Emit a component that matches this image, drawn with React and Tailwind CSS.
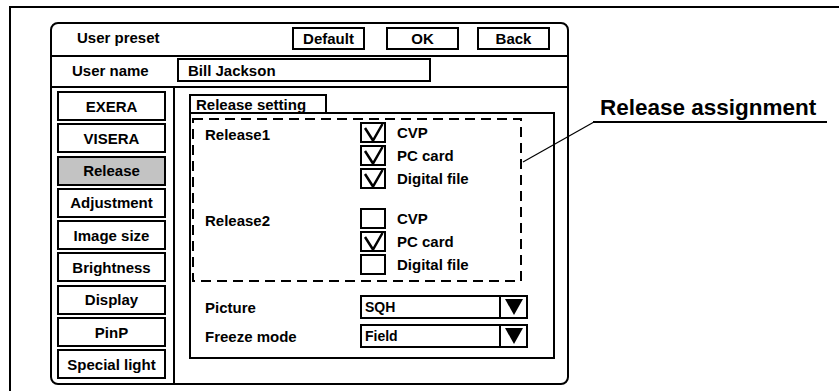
import React from 'react';

const MENU = [
  'EXERA',
  'VISERA',
  'Release',
  'Adjustment',
  'Image size',
  'Brightness',
  'Display',
  'PinP',
  'Special light',
];

const RELEASES = [
  { label: 'Release1', items: [['CVP', true], ['PC card', true], ['Digital file', true]] },
  { label: 'Release2', items: [['CVP', false], ['PC card', true], ['Digital file', false]] },
];

const Check = ({ checked }) => (
  <div className="w-[26px] h-[21px] border-2 border-black bg-white shrink-0">
    {checked && (
      <svg width="22" height="17" viewBox="0 0 22 17" className="overflow-visible">
        <polyline points="3,4 11,16.5 20.5,0" fill="none" stroke="#000" strokeWidth="2.5" />
      </svg>
    )}
  </div>
);

const Select = ({ value }) => (
  <div className="flex w-[168px] h-[24px] border-2 border-black">
    <div className="flex-1 flex items-center pl-[3px] text-[14px] leading-none">{value}</div>
    <div className="w-[27px] border-l-2 border-black flex items-center justify-center">
      <svg width="18" height="16" viewBox="0 0 18 16">
        <polygon points="0,0 18,0 9,16" fill="#000" />
      </svg>
    </div>
  </div>
);

const HeaderButton = ({ children, className = '' }) => (
  <div className={`mt-[3px] w-[73px] h-[23px] border-2 border-black flex items-center justify-center ${className}`}>
    {children}
  </div>
);

export default function App() {
  return (
    <div className="relative w-[839px] h-[391px] bg-white overflow-hidden text-black font-bold font-['Liberation_Sans',Arial,sans-serif] text-[15px] leading-none">
      {/* open frame, top and left edges only */}
      <div className="ml-[9px] mt-[6px] h-[385px] border-t-2 border-l-2 border-black">
        <div className="ml-[39px] mt-[14px] w-[519px] h-[363px] border-2 border-black rounded-[8px] flex flex-col">
          {/* Header */}
          <div className="flex items-start h-[33px] border-b-2 border-black">
            <div className="pl-[25px] pt-[6px]">User preset</div>
            <HeaderButton className="ml-auto">Default</HeaderButton>
            <HeaderButton className="ml-[21px]">OK</HeaderButton>
            <HeaderButton className="ml-[18px] mr-[17px]">Back</HeaderButton>
          </div>

          {/* User name */}
          <div className="flex items-start h-[31px] border-b-2 border-black">
            <div className="w-[125px] pl-[20px] pt-[6px]">User name</div>
            <div className="mt-[1px] w-[254px] h-[24px] border-2 border-black flex items-center pl-[9px]">
              Bill Jackson
            </div>
          </div>

          {/* Body */}
          <div className="flex flex-1">
            <div className="w-[123px] border-r-2 border-black pl-[5px] pt-[3px] flex flex-col gap-[2.3px]">
              {MENU.map((m) => (
                <div
                  key={m}
                  className={`w-[109px] h-[30px] border-2 border-black flex items-center justify-center ${
                    m === 'Release' ? 'bg-[#c3c3c3]' : 'bg-white'
                  }`}
                >
                  {m}
                </div>
              ))}
            </div>

            <div className="pl-[14px] pt-[6px]">
              <div className="w-[138px] h-[18px] border-2 border-b-0 border-black pl-[5px] pt-[1px]">
                Release setting
              </div>
              <div className="w-[366px] h-[247px] border-2 border-black">
                {/* Release assignment area */}
                <div className="relative ml-[1px] mt-[4px] w-[330px] h-[164px] pl-[13px] pt-[4px] flex flex-col gap-[19px]">
                  <svg width="330" height="164" className="absolute left-0 top-0 pointer-events-none">
                    <rect x="1" y="1" width="328" height="162" fill="none" stroke="#000" strokeWidth="2" strokeDasharray="10 6" />
                  </svg>
                  {RELEASES.map((r) => (
                    <div key={r.label} className="flex">
                      <div className="w-[155px] pt-[5px]">{r.label}</div>
                      <div className="flex flex-col gap-[2px]">
                        {r.items.map(([name, on]) => (
                          <div key={name} className="flex items-center h-[21px]">
                            <Check checked={on} />
                            <span className="pl-[11px]">{name}</span>
                          </div>
                        ))}
                      </div>
                    </div>
                  ))}
                </div>

                <div className="mt-[13px] pl-[14px] flex flex-col gap-[5px]">
                  <div className="flex items-center">
                    <div className="w-[155px]">Picture</div>
                    <Select value="SQH" />
                  </div>
                  <div className="flex items-center">
                    <div className="w-[155px]">Freeze mode</div>
                    <Select value="Field" />
                  </div>
                </div>
              </div>
            </div>
          </div>
        </div>
      </div>

      {/* Callout */}
      <svg width="839" height="391" className="absolute left-0 top-0 pointer-events-none">
        <line x1="523" y1="162" x2="594" y2="122" stroke="#000" strokeWidth="1.2" />
      </svg>
      <div className="absolute left-[593px] top-[97px] w-[234px] pl-[7px] pb-[2px] border-b-2 border-black text-[22.5px] leading-[22px]">
        Release assignment
      </div>
    </div>
  );
}
